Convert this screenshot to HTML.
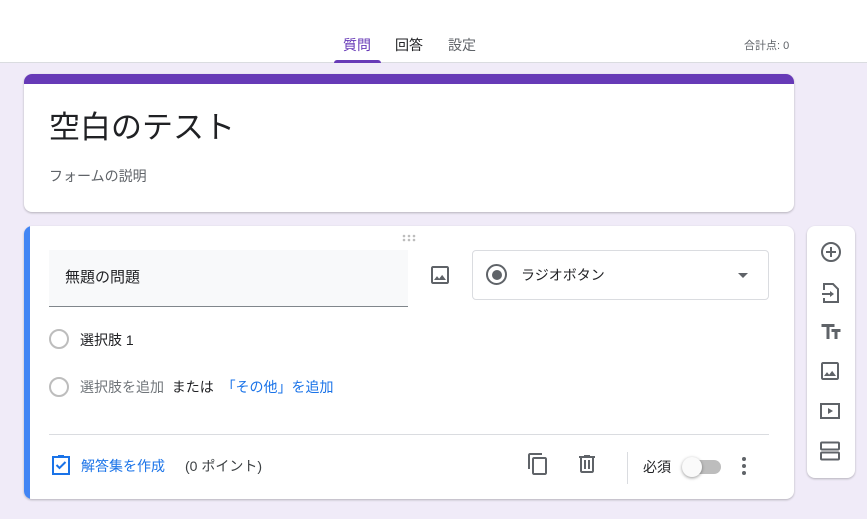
<!DOCTYPE html>
<html><head><meta charset="utf-8"><style>
*{margin:0;padding:0;box-sizing:border-box}
body{width:867px;height:519px;background:#f0ebf8;font-family:"Liberation Sans","Noto Sans CJK JP",sans-serif;position:relative;overflow:hidden;color:#202124}
.hdr{position:absolute;left:0;top:0;width:867px;height:63px;background:#fff;border-bottom:1px solid #dadce0}
.tab{position:absolute;top:35px;font-size:14px;color:#5f6368}
.abs{position:absolute}
.card{position:absolute;background:#fff;border-radius:8px;box-shadow:0 1px 2px rgba(0,0,0,.25);overflow:hidden}
svg{position:absolute}
.rad{position:absolute;width:20px;height:20px;border:2px solid #bdbdbd;border-radius:50%}
</style></head><body>
<div class="hdr">
<div class="tab" style="left:343px;color:#673ab7">質問</div>
<div class="tab" style="left:395px;color:#202124">回答</div>
<div class="tab" style="left:448px">設定</div>
<div class="abs" style="left:334px;top:60px;width:47px;height:3px;background:#673ab7;border-radius:3px 3px 0 0"></div>
<div class="tab" style="left:744px;top:37px;font-size:11px">合計点: 0</div>
</div>
<div class="card" style="left:24px;top:74px;width:770px;height:138px">
<div class="abs" style="left:0;top:0;width:770px;height:10px;background:#673ab7"></div>
<div class="abs" style="left:25px;top:28px;font-size:31px;color:#202124">空白のテスト</div>
<div class="abs" style="left:25px;top:92px;font-size:14px;color:#5f6368">フォームの説明</div>
</div>
<div class="card" style="left:24px;top:226px;width:770px;height:273px">
<div class="abs" style="left:0;top:0;width:6px;height:273px;background:#4285f4"></div>
<svg style="left:378px;top:8px" width="16" height="8"><g fill="#bdbdbd"><circle cx="2" cy="2" r="1.3"/><circle cx="7" cy="2" r="1.3"/><circle cx="12" cy="2" r="1.3"/><circle cx="2" cy="6" r="1.3"/><circle cx="7" cy="6" r="1.3"/><circle cx="12" cy="6" r="1.3"/></g></svg>
<div class="abs" style="left:25px;top:24px;width:359px;height:57px;background:#f8f9fa;border-bottom:1px solid #80868b;padding:16px 0 0 16px;font-size:15px">無題の問題</div>
<svg style="left:404px;top:37px" width="24" height="24" viewBox="0 0 24 24"><path fill="#5f6368" d="M19 5v14H5V5h14m0-2H5c-1.1 0-2 .9-2 2v14c0 1.1.9 2 2 2h14c1.1 0 2-.9 2-2V5c0-1.1-.9-2-2-2zm-4.86 8.86l-3 3.87L9 13.14 6 17h12l-3.86-5.14z"/></svg>
<div class="abs" style="left:448px;top:24px;width:297px;height:50px;border:1px solid #dadce0;border-radius:4px"></div>
<div class="abs" style="left:462px;top:38px;width:21px;height:21px;border:2px solid #5f6368;border-radius:50%"><div style="position:absolute;left:3.5px;top:3.5px;width:10px;height:10px;border-radius:50%;background:#5f6368"></div></div>
<div class="abs" style="left:497px;top:39px;font-size:14px">ラジオボタン</div>
<div class="abs" style="left:714px;top:47px;border:5px solid transparent;border-top-color:#5f6368"></div>
<div class="rad" style="left:25px;top:103px"></div>
<div class="abs" style="left:56px;top:104px;font-size:14px">選択肢 1</div>
<div class="rad" style="left:25px;top:151px"></div>
<div class="abs" style="left:56px;top:151px;font-size:14px;color:#70757a">選択肢を追加 &nbsp;<span style="color:#202124">または</span> &nbsp;<span style="color:#1a73e8">「その他」を追加</span></div>
<div class="abs" style="left:25px;top:208px;width:720px;height:1px;background:#dadce0"></div>
<svg style="left:25px;top:227px" width="24" height="24" viewBox="0 0 24 24"><path fill="none" stroke="#1a73e8" stroke-width="2" d="M4 4h16v17H4z"/><path fill="#1a73e8" d="M9 2h6v3H9z"/><path fill="none" stroke="#1a73e8" stroke-width="2" d="M7.5 12l3 3 6-6"/></svg>
<div class="abs" style="left:57px;top:230px;font-size:14px;color:#1a73e8">解答集を作成</div>
<div class="abs" style="left:161px;top:230px;font-size:14px;color:#3c4043">(0 ポイント)</div>
<svg style="left:502px;top:226px" width="24" height="24" viewBox="0 0 24 24"><path fill="#5f6368" d="M16 1H4c-1.1 0-2 .9-2 2v14h2V3h12V1zm3 4H8c-1.1 0-2 .9-2 2v14c0 1.1.9 2 2 2h11c1.1 0 2-.9 2-2V7c0-1.1-.9-2-2-2zm0 16H8V7h11v14z"/></svg>
<svg style="left:551px;top:226px" width="24" height="24" viewBox="0 0 24 24"><path fill="#5f6368" d="M15 4V3H9v1H4v2h1v13c0 1.1.9 2 2 2h10c1.1 0 2-.9 2-2V6h1V4h-5zm2 15H7V6h10v13zM9 8h2v9H9zm4 0h2v9h-2z"/></svg>
<div class="abs" style="left:603px;top:226px;width:1px;height:32px;background:#dadce0"></div>
<div class="abs" style="left:619px;top:231px;font-size:14px">必須</div>
<div class="abs" style="left:663px;top:234px;width:34px;height:14px;border-radius:7px;background:#bdbdbd"></div>
<div class="abs" style="left:658px;top:231px;width:20px;height:20px;border-radius:50%;background:#fafafa;box-shadow:0 1px 3px rgba(0,0,0,.4)"></div>
<svg style="left:708px;top:228px" width="24" height="24" viewBox="0 0 24 24"><g fill="#5f6368"><circle cx="12" cy="5" r="2"/><circle cx="12" cy="12" r="2"/><circle cx="12" cy="19" r="2"/></g></svg>
</div>
<div class="card" style="left:807px;top:226px;width:48px;height:252px">
<svg style="left:12px;top:14px" width="24" height="24" viewBox="0 0 24 24"><circle cx="12" cy="12" r="9" fill="none" stroke="#5f6368" stroke-width="2"/><path stroke="#5f6368" stroke-width="2" d="M12 7v10M7 12h10"/></svg>
<svg style="left:12px;top:55px" width="24" height="24" viewBox="0 0 24 24"><path fill="none" stroke="#5f6368" stroke-width="2" d="M5 9V3h9l5 5v13H5v-4"/><path stroke="#5f6368" stroke-width="2" d="M3 13h10"/><path fill="#5f6368" d="M11 10l4 3-4 3z"/></svg>
<svg style="left:12px;top:94px" width="24" height="24" viewBox="0 0 24 24"><path fill="#5f6368" d="M2.5 4v3h5v12h3V7h5V4h-13zm19 5h-9v3h3v7h3v-7h3V9z"/></svg>
<svg style="left:11px;top:133px" width="24" height="24" viewBox="0 0 24 24"><path fill="#5f6368" d="M19 5v14H5V5h14m0-2H5c-1.1 0-2 .9-2 2v14c0 1.1.9 2 2 2h14c1.1 0 2-.9 2-2V5c0-1.1-.9-2-2-2zm-4.86 8.86l-3 3.87L9 13.14 6 17h12l-3.86-5.14z"/></svg>
<svg style="left:11px;top:173px" width="24" height="24" viewBox="0 0 24 24"><path fill="none" stroke="#5f6368" stroke-width="2" d="M3 5h18v14H3z"/><path fill="#5f6368" d="M10 9l5 3-5 3z"/></svg>
<svg style="left:11px;top:213px" width="24" height="24" viewBox="0 0 24 24"><rect x="3" y="3.5" width="18" height="7" rx="1" fill="none" stroke="#5f6368" stroke-width="2"/><rect x="3" y="13.5" width="18" height="7" rx="1" fill="none" stroke="#5f6368" stroke-width="2"/></svg>
</div>
</body></html>
